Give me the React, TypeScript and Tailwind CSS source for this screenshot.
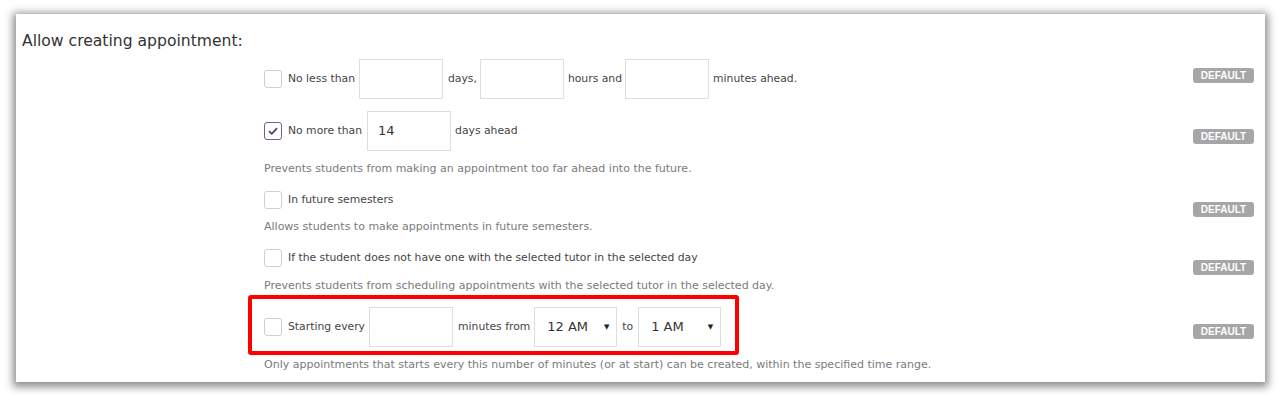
import { type ReactNode } from 'react';

const font = { fontFamily: '"DejaVu Sans", Verdana, sans-serif' };

const Checkbox = ({ checked = false }: { checked?: boolean }) => (
  <span
    className={`flex h-[18px] w-[18px] shrink-0 items-center justify-center rounded-[3px] border bg-white ${
      checked ? 'border-[#7a5a92]' : 'border-[#cfcfcf]'
    }`}
  >
    {checked && (
      <svg width="10" height="8" viewBox="0 0 10 8">
        <path d="M1 4.2 L3.8 6.8 L9 1.2" fill="none" stroke="#4b3a63" strokeWidth="1.7" />
      </svg>
    )}
  </span>
);

const TextBox = ({ value = '' }: { value?: string }) => (
  <span className="flex h-[40px] w-[84px] shrink-0 items-center border border-[#dedede] bg-white pl-[10px] text-[13px] text-[#333]">
    {value}
  </span>
);

const SelectBox = ({ value }: { value: string }) => (
  <span className="flex h-[40px] w-[83px] shrink-0 items-center justify-between border border-[#dedede] bg-white pr-[7px] pl-[12px] text-[13px] text-[#333]">
    <span>{value}</span>
    <span className="text-[7px] text-[#222]">▼</span>
  </span>
);

const Badge = ({ top }: { top: string }) => (
  <span
    className={`flex h-[15px] w-[61px] shrink-0 items-center justify-center rounded-[3px] bg-[#a6a6a6] text-[10px] font-bold text-white ${top}`}
    style={{ fontFamily: '"Liberation Sans", Arial, sans-serif' }}
  >
    DEFAULT
  </span>
);

const Setting = ({
  children,
  badgeTop,
  desc,
  descTop = 'mt-[11px]',
}: {
  children: ReactNode;
  badgeTop: string;
  desc?: string;
  descTop?: string;
}) => (
  <div className="flex items-start justify-between">
    <div className="flex flex-col">
      {children}
      {desc && <p className={`text-[11px] leading-[14px] text-[#7a7a7a] ${descTop}`}>{desc}</p>}
    </div>
    <Badge top={badgeTop} />
  </div>
);

export default function App() {
  return (
    <div className="h-[396px] w-[1283px] bg-white pt-[14px] pl-[16px]" style={font}>
      <div className="h-[368px] w-[1249px] bg-white shadow-[0_2px_8px_3px_rgba(0,0,0,0.45)]">
        <h2 className="pt-[17px] pl-[6px] text-[15.6px] leading-[20px] text-[#333]">Allow creating appointment:</h2>

        <div className="mt-[8px] flex flex-col pr-[11px] pl-[248px] text-[10.8px] text-[#444]">
          <Setting badgeTop="mt-[9px]">
            <div className="flex h-[40px] items-center">
              <Checkbox />
              <span className="ml-[6px] mr-[4px]">No less than</span>
              <TextBox />
              <span className="ml-[5px] mr-[3px]">days,</span>
              <TextBox />
              <span className="ml-[4px] mr-[3px]">hours and</span>
              <TextBox />
              <span className="ml-[4px]">minutes ahead.</span>
            </div>
          </Setting>

          <div className="mt-[12px]">
            <Setting badgeTop="mt-[18px]" desc="Prevents students from making an appointment too far ahead into the future.">
              <div className="flex h-[40px] items-center">
                <Checkbox checked />
                <span className="ml-[6px] mr-[5px]">No more than</span>
                <TextBox value="14" />
                <span className="ml-[4px]">days ahead</span>
              </div>
            </Setting>
          </div>

          <div className="mt-[13px]">
            <Setting badgeTop="mt-[13px]" descTop="mt-[9px]" desc="Allows students to make appointments in future semesters.">
              <div className="flex h-[22px] items-center">
                <Checkbox />
                <span className="ml-[6px]">In future semesters</span>
              </div>
            </Setting>
          </div>

          <div className="mt-[13px]">
            <Setting
              badgeTop="mt-[13px]"
              descTop="mt-[10px]"
              desc="Prevents students from scheduling appointments with the selected tutor in the selected day."
            >
              <div className="flex h-[22px] items-center">
                <Checkbox />
                <span className="ml-[6px]">If the student does not have one with the selected tutor in the selected day</span>
              </div>
            </Setting>
          </div>

          <div className="mt-[14px]">
            <Setting
              badgeTop="mt-[17px]"
              desc="Only appointments that starts every this number of minutes (or at start) can be created, within the specified time range."
            >
              <div className="relative flex h-[40px] items-center">
                <Checkbox />
                <span className="ml-[6px] mr-[4px]">Starting every</span>
                <TextBox />
                <span className="ml-[5px] mr-[4px]">minutes from</span>
                <SelectBox value="12 AM" />
                <span className="ml-[5px] mr-[5px]">to</span>
                <SelectBox value="1 AM" />
                <span className="pointer-events-none absolute top-[-12px] left-[-16px] h-[60px] w-[491px] rounded-[3px] border-4 border-[#ff0000]" />
              </div>
            </Setting>
          </div>
        </div>
      </div>
    </div>
  );
}
